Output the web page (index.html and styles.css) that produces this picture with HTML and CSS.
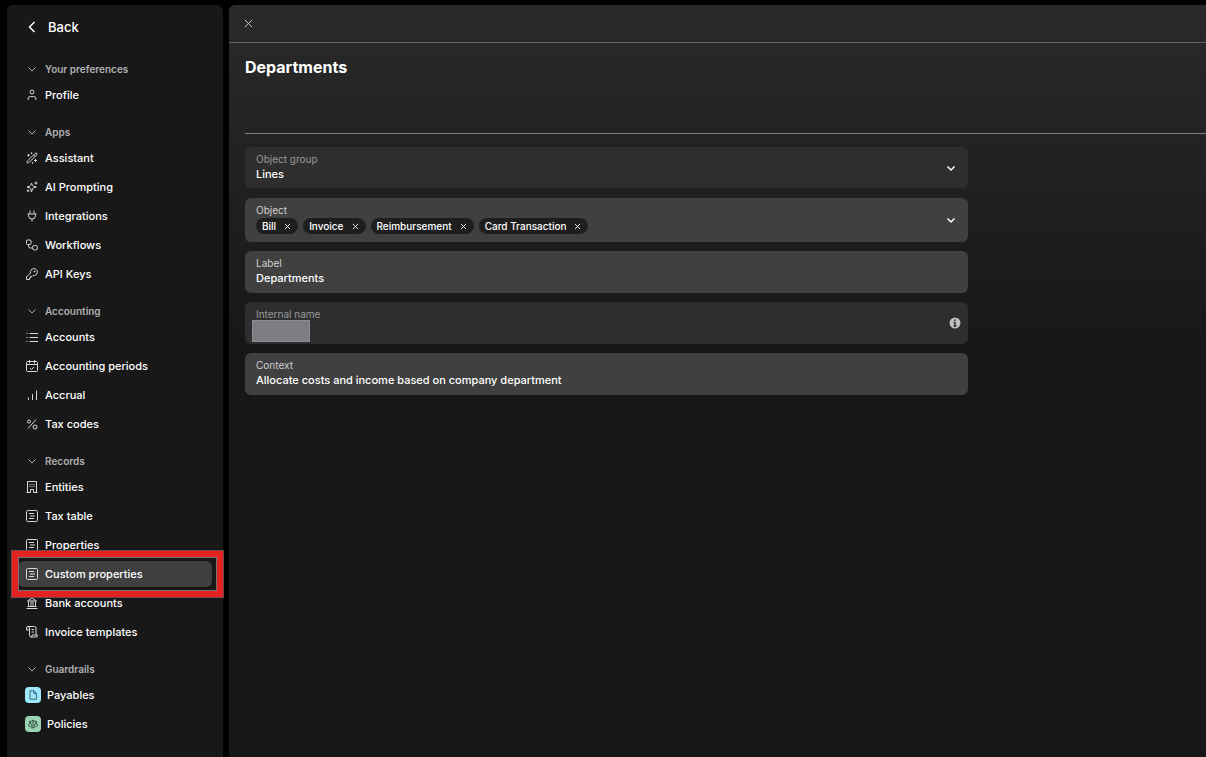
FILE: index.html
```html
<!DOCTYPE html>
<html lang="en">
<head>
    <meta charset="UTF-8">
    <title>Custom properties</title>
    <link rel="stylesheet" href="styles.css">
</head>
<body>
    <nav class="sidebar">
        <a class="back" href="#">
            <svg class="icon" viewBox="0 0 24 24"><path d="M17 2 7 12l10 10" stroke-width="3"/></svg>
            Back
        </a>

        <section class="group">
            <button class="group-title" type="button"><svg class="icon" viewBox="0 0 24 24"><path d="m5 9 7 7 7-7"/></svg>Your preferences</button>
            <a class="item" href="#"><svg class="icon" viewBox="0 0 24 24"><circle cx="12" cy="6" r="4"/><path d="M4 22v-2a5 5 0 0 1 5-5h6a5 5 0 0 1 5 5v2"/></svg>Profile</a>
        </section>

        <section class="group">
            <button class="group-title" type="button"><svg class="icon" viewBox="0 0 24 24"><path d="m5 9 7 7 7-7"/></svg>Apps</button>
            <a class="item" href="#"><svg class="icon" viewBox="0 0 24 24"><path d="M2.500 18.500 18.500 2.500a2 2 0 0 1 3 3L5.500 21.500a2 2 0 0 1-3-3ZM15 6l3 3M5 4v5M2.500 6.500h5M19 14v6M16 17h6M11 1v3M9.500 2.500h3M13 20v3M11.500 21.500h3"/></svg>Assistant</a>
            <a class="item" href="#"><svg class="icon" viewBox="0 0 24 24"><path d="M11 4 9.500 9 8 10.500 2 12l6 2 1.500 1.500L11 22l2-6.500 1.500-1.500 6-2-6-1.500L13 9ZM20 1v6M17 4h6M4 17v5M1.500 19.500h5"/></svg>AI Prompting</a>
            <a class="item" href="#"><svg class="icon" viewBox="0 0 24 24"><path d="M8 1v6M16 1v6M3 8h18M5 8v3a7 7 0 0 0 14 0V8M12 18v5"/></svg>Integrations</a>
            <a class="item" href="#"><svg class="icon" viewBox="0 0 24 24"><rect x="1" y="2" width="9" height="9" rx="2"/><rect x="13" y="13" width="10" height="9" rx="4"/><path d="M5 11v3a4 4 0 0 0 4 4h4"/></svg>Workflows</a>
            <a class="item" href="#"><svg class="icon" viewBox="0 0 24 24"><path d="M9 10a7 7 0 1 1 5 5l-2 2H9v3H7v3H1v-5Z"/><circle cx="17" cy="7" r="1"/></svg>API Keys</a>
        </section>

        <section class="group">
            <button class="group-title" type="button"><svg class="icon" viewBox="0 0 24 24"><path d="m5 9 7 7 7-7"/></svg>Accounting</button>
            <a class="item" href="#"><svg class="icon" viewBox="0 0 24 24"><path d="M7 5h17M7 13h17M7 21h17M1 5h2M1 13h2M1 21h2"/></svg>Accounts</a>
            <a class="item" href="#"><svg class="icon" viewBox="0 0 24 24"><rect x="1" y="3" width="22" height="20" rx="2"/><path d="M7 0v7M17 0v7M1 9h22M8 16l3 3 5-5"/></svg>Accounting periods</a>
            <a class="item" href="#"><svg class="icon" viewBox="0 0 24 24"><path d="M5 22v-5M13 22V10M21 22V3"/></svg>Accrual</a>
            <a class="item" href="#"><svg class="icon" viewBox="0 0 24 24"><circle cx="6" cy="7" r="3"/><circle cx="18" cy="18" r="4"/><path d="M20 3 4 21"/></svg>Tax codes</a>
        </section>

        <section class="group">
            <button class="group-title" type="button"><svg class="icon" viewBox="0 0 24 24"><path d="m5 9 7 7 7-7"/></svg>Records</button>
            <a class="item" href="#"><svg class="icon" viewBox="0 0 24 24"><path d="M3 23V1h18v22M1 23h8M15 23h8M9 23v-6h6v6M7 7h2M11 7h2M15 7h2M7 11h2M11 11h2M15 11h2"/></svg>Entities</a>
            <a class="item" href="#"><svg class="icon" viewBox="0 0 24 24"><rect x="1" y="1" width="22" height="22" rx="2"/><path d="M6 7h10M8 12h10M6 17h10"/></svg>Tax table</a>
            <a class="item" href="#"><svg class="icon" viewBox="0 0 24 24"><rect x="1" y="1" width="22" height="22" rx="2"/><path d="M6 7h10M8 12h10M6 17h10"/></svg>Properties</a>
            <a class="item active" href="#"><svg class="icon" viewBox="0 0 24 24"><rect x="1" y="1" width="22" height="22" rx="2"/><path d="M6 7h10M8 12h10M6 17h10"/></svg>Custom properties<span class="marker"></span></a>
            <a class="item" href="#"><svg class="icon" viewBox="0 0 24 24"><path d="M3 8 12 2l9 6ZM1 23h22M3 19h18M5 9v10M10 9v10M14 9v10M19 9v10"/></svg>Bank accounts</a>
            <a class="item" href="#"><svg class="icon" viewBox="0 0 24 24"><path d="M6 8H1V4a3 3 0 0 1 6 0v15a3 3 0 0 0 3 3h10a3 3 0 0 0 3-3v-1H12v1a2 2 0 0 1-2 3M4 1h13a3 3 0 0 1 3 3v14M11 7h5M11 12h5"/></svg>Invoice templates</a>
        </section>

        <section class="group">
            <button class="group-title" type="button"><svg class="icon" viewBox="0 0 24 24"><path d="m5 9 7 7 7-7"/></svg>Guardrails</button>
            <a class="item tiled" href="#"><span class="tile blue"><svg viewBox="0 0 24 24"><path d="M5 2h9l6 6v14H5ZM14 2v6h6"/></svg></span>Payables</a>
            <a class="item tiled" href="#"><span class="tile green"><svg viewBox="0 0 24 24"><path d="M12 2v19M7 21h10M3 6c4 0 6-1 9-2 3 1 5 2 9 2M5 7l-4 9a5 5 0 0 0 8 0ZM19 7l-4 9a5 5 0 0 0 8 0Z"/></svg></span>Policies</a>
        </section>
    </nav>

    <main class="panel">
        <header class="panel-bar">
            <button class="close" type="button" aria-label="Close"><svg viewBox="0 0 24 24"><path d="M4 4l16 16M20 4 4 20"/></svg></button>
        </header>

        <div class="content">
            <h1>Departments</h1>

            <form class="fields">
                <div class="field short disabled">
                    <label for="object-group">Object group</label>
                    <select id="object-group" disabled>
                        <option>Lines</option>
                    </select>
                    <svg class="chevron" viewBox="0 0 24 24"><path d="m5 9 7 7 7-7"/></svg>
                </div>

                <div class="field tall">
                    <span class="label" id="object-label">Object</span>
                    <div class="chips" role="group" aria-labelledby="object-label">
                        <span class="chip">Bill<button type="button" aria-label="Remove Bill"><svg viewBox="0 0 24 24"><path d="M3 3l18 18M21 3 3 21"/></svg></button></span>
                        <span class="chip">Invoice<button type="button" aria-label="Remove Invoice"><svg viewBox="0 0 24 24"><path d="M3 3l18 18M21 3 3 21"/></svg></button></span>
                        <span class="chip">Reimbursement<button type="button" aria-label="Remove Reimbursement"><svg viewBox="0 0 24 24"><path d="M3 3l18 18M21 3 3 21"/></svg></button></span>
                        <span class="chip">Card Transaction<button type="button" aria-label="Remove Card Transaction"><svg viewBox="0 0 24 24"><path d="M3 3l18 18M21 3 3 21"/></svg></button></span>
                    </div>
                    <button class="chevron" type="button" aria-label="Show objects"><svg viewBox="0 0 24 24"><path d="m5 9 7 7 7-7"/></svg></button>
                </div>

                <div class="field">
                    <label for="label">Label</label>
                    <input type="text" id="label" value="Departments">
                </div>

                <div class="field disabled">
                    <label for="internal-name">Internal name</label>
                    <input type="text" id="internal-name" disabled>
                    <span class="mask"></span>
                    <svg class="info" viewBox="0 0 24 24"><circle cx="12" cy="12" r="11"/><path d="M12 5v3M9 11h3v7M9 18h6"/></svg>
                </div>

                <div class="field">
                    <label for="context">Context</label>
                    <input type="text" id="context" value="Allocate costs and income based on company department">
                </div>
            </form>
        </div>
    </main>
</body>
</html>
```
FILE: styles.css
```css
* {
  box-sizing: border-box;
}

body {
  margin: 0;
  padding: 5px 0 0 7px;
  min-height: 100vh;
  display: flex;
  gap: 6px;
  background: #000;
  color: #fff;
  font-family: Inter, "Liberation Sans", sans-serif;
  font-size: 11px;
  font-weight: 500;
}

button, input, select {
  font: inherit;
  color: inherit;
  margin: 0;
  padding: 0;
  border: 0;
  background: none;
}

button {
  cursor: pointer;
}

a {
  color: inherit;
  text-decoration: none;
}

svg {
  display: block;
  fill: none;
  stroke: currentColor;
  stroke-width: 2;
  stroke-linejoin: round;
}

/* sidebar */
.sidebar {
  flex: 0 0 216px;
  display: flex;
  flex-direction: column;
  gap: 14px;
  padding: 12px 11px;
  background: #181818;
  border-radius: 6px 6px 0 0;
}

.back {
  display: flex;
  align-items: center;
  gap: 10px;
  height: 20px;
  margin-bottom: 8px;
  padding-left: 8px;
  font-size: 13px;
}

.icon {
  flex: none;
  width: 12px;
  height: 12px;
}

.group {
  display: flex;
  flex-direction: column;
  gap: 3px;
}

.group-title, .item {
  display: flex;
  align-items: center;
  gap: 7px;
  padding-left: 8px;
}

.group-title {
  height: 20px;
  color: #b0b0b0;
  font-size: 10px;
  font-weight: 600;
}

.item {
  height: 26px;
  border-radius: 6px;
}

.item .icon {
  color: #d8d8d8;
}

.active {
  position: relative;
  background: #3f3f3f;
}

.marker {
  position: absolute;
  top: -11px;
  right: -12px;
  bottom: -11px;
  left: -7px;
  border: 7px solid #e32222;
  outline: 1px solid #70474a;
  outline-offset: -1px;
  box-shadow: inset 0 0 0 1px #747474;
}

.tiled {
  gap: 6px;
  padding-left: 7px;
}

.tile {
  display: grid;
  place-items: center;
  width: 16px;
  height: 16px;
  border-radius: 4px;
  color: #244b55;
}

.tile svg {
  width: 10px;
  height: 10px;
}

.blue {
  background: #9ce9ff;
}

.green {
  background: #9bd3b3;
  color: #24402f;
}

/* main panel */
.panel {
  flex: 1;
  min-width: 0;
  background: linear-gradient(#2a2a2a, #171717 345px);
  border-radius: 6px 0 0 0;
}

.panel-bar {
  display: flex;
  align-items: center;
  height: 38px;
  padding-left: 14px;
  border-bottom: 1px solid #646464;
}

.close svg {
  width: 11px;
  height: 11px;
  color: #d0d0d0;
}

.content {
  padding-left: 16px;
}

h1 {
  height: 91px;
  margin: 0 0 13px;
  padding-top: 14px;
  border-bottom: 1px solid #808080;
  font-size: 16px;
  font-weight: 700;
  line-height: 20px;
}

.fields {
  display: flex;
  flex-direction: column;
  gap: 9px;
  max-width: 723px;
}

.field {
  position: relative;
  display: flex;
  flex-direction: column;
  height: 42px;
  padding: 6px 11px;
  background: #404040;
  border-radius: 6px;
}

.field.short {
  height: 41px;
  margin-bottom: 1px;
}

.field.tall {
  height: 44px;
}

.field.disabled {
  background: #2e2e2e;
}

.field label, .label {
  height: 13px;
  color: #d0d0d0;
  font-size: 10px;
  font-weight: 400;
  line-height: 13px;
}

.field.disabled label {
  color: #999;
}

.field input, .field select {
  width: 100%;
  height: 16px;
  color: #fff;
  opacity: 1;
  appearance: none;
  outline: 0;
}

.chips {
  display: flex;
  gap: 5px;
  margin-top: 1px;
}

.chip {
  display: flex;
  align-items: center;
  gap: 8px;
  height: 16px;
  padding: 0 7px 0 6px;
  background: #1e1e1e;
  border-radius: 8px;
  font-size: 10px;
}

.chip svg {
  width: 7px;
  height: 7px;
  stroke-width: 3;
}

.chevron, .info {
  position: absolute;
  top: 50%;
  right: 11px;
  width: 12px;
  height: 12px;
  margin-top: -6px;
  stroke-width: 3;
}

.chevron svg {
  stroke-width: 3;
}

.info {
  right: 7px;
}

.info circle {
  fill: #c0c0c0;
  stroke: none;
}

.info path {
  stroke: #2e2e2e;
}

.mask {
  position: absolute;
  top: 18px;
  left: 7px;
  width: 58px;
  height: 22px;
  border: 1px solid #8a8c91;
  background: #7b7d82;
}
```
